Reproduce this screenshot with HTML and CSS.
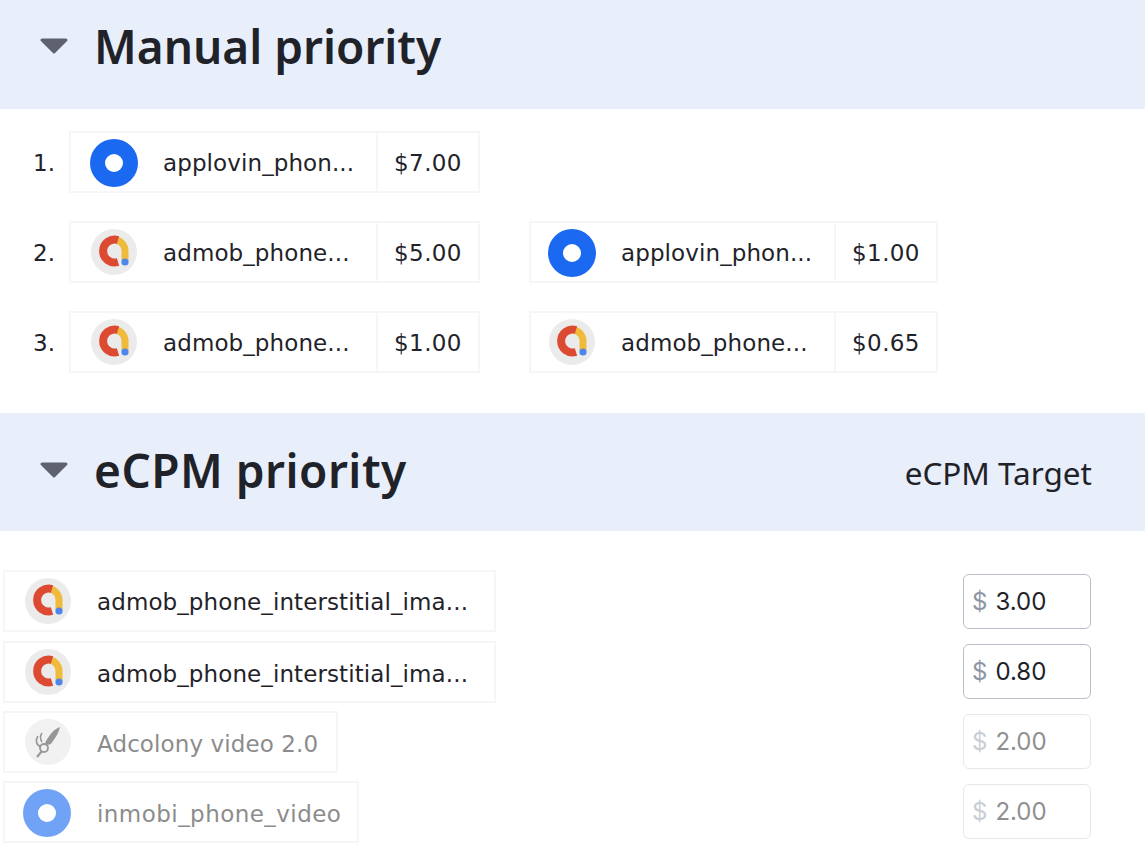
FILE: index.html
```html
<!DOCTYPE html>
<html lang="en">
<head>
  <meta charset="UTF-8">
  <title>Mediation priority</title>
  <link rel="stylesheet" href="styles.css">
</head>
<body>
  <svg class="defs" width="0" height="0">
    <symbol id="caret" viewBox="0 0 28 16">
      <path d="M2 2 H26 L14 14 Z" fill="#5e6270" stroke="#5e6270" stroke-width="3" stroke-linejoin="round"/>
    </symbol>
    <symbol id="admob" viewBox="0 0 46 46">
      <circle cx="23" cy="23" r="23" fill="#ebebeb"/>
      <path d="M25 11 A11 11 0 0 1 34 22 L34 32" fill="none" stroke="#f0bb3c" stroke-width="7"/>
      <path d="M27 11 A11.500 11.500 0 1 0 27 33" fill="none" stroke="#dc4a32" stroke-width="8"/>
      <circle cx="34" cy="33" r="3.600" fill="#4f86ec"/>
    </symbol>
    <symbol id="adcolony" viewBox="0 0 46 46">
      <circle cx="23" cy="23" r="23" fill="#f1f1f1"/>
      <path d="M35 8 C29 10 24 16 20 24 C23 27 26 26 28 22 C31 18 34 13 35 8 Z" fill="#979797"/>
      <path d="M13 17 C10 21 11 26 16 28 M17 14 C15 17 15 20 17 23" fill="none" stroke="#979797" stroke-width="1.600"/>
      <circle cx="19" cy="29" r="4" fill="none" stroke="#979797" stroke-width="1.800"/>
      <path d="M17 32 L12 38" stroke="#979797" stroke-width="2" fill="none"/>
    </symbol>
    <symbol id="ring" viewBox="0 0 48 48">
      <circle cx="24" cy="24" r="24" fill="currentColor"/>
      <circle cx="24" cy="24" r="9" fill="#fff"/>
    </symbol>
  </svg>

  <div class="section-head manual-head">
    <svg class="caret"><use href="#caret"/></svg>
    <h2>Manual priority</h2>
  </div>

  <div class="manual-list">
    <div class="manual-row">
      <span class="num">1.</span>
      <div class="chip chip-manual">
        <div class="chip-name"><svg class="logo logo-ring"><use href="#ring"/></svg><span>applovin_phon...</span></div>
        <div class="chip-price">$7.00</div>
      </div>
    </div>
    <div class="manual-row">
      <span class="num">2.</span>
      <div class="chip chip-manual">
        <div class="chip-name"><svg class="logo"><use href="#admob"/></svg><span>admob_phone...</span></div>
        <div class="chip-price">$5.00</div>
      </div>
      <div class="chip chip-manual">
        <div class="chip-name"><svg class="logo logo-ring"><use href="#ring"/></svg><span>applovin_phon...</span></div>
        <div class="chip-price">$1.00</div>
      </div>
    </div>
    <div class="manual-row">
      <span class="num">3.</span>
      <div class="chip chip-manual">
        <div class="chip-name"><svg class="logo"><use href="#admob"/></svg><span>admob_phone...</span></div>
        <div class="chip-price">$1.00</div>
      </div>
      <div class="chip chip-manual">
        <div class="chip-name"><svg class="logo"><use href="#admob"/></svg><span>admob_phone...</span></div>
        <div class="chip-price">$0.65</div>
      </div>
    </div>
  </div>

  <div class="section-head ecpm-head">
    <svg class="caret"><use href="#caret"/></svg>
    <h2>eCPM priority</h2>
    <span class="target-label">eCPM Target</span>
  </div>

  <div class="ecpm-list">
    <div class="ecpm-row">
      <div class="chip chip-wide">
        <div class="chip-name"><svg class="logo"><use href="#admob"/></svg><span>admob_phone_interstitial_ima...</span></div>
      </div>
      <div class="price-input"><span class="dollar">$</span><span>3.00</span></div>
    </div>
    <div class="ecpm-row">
      <div class="chip chip-wide">
        <div class="chip-name"><svg class="logo"><use href="#admob"/></svg><span>admob_phone_interstitial_ima...</span></div>
      </div>
      <div class="price-input"><span class="dollar">$</span><span>0.80</span></div>
    </div>
    <div class="ecpm-row off">
      <div class="chip chip-adcolony">
        <div class="chip-name"><svg class="logo"><use href="#adcolony"/></svg><span>Adcolony video 2.0</span></div>
      </div>
      <div class="price-input"><span class="dollar">$</span><span>2.00</span></div>
    </div>
    <div class="ecpm-row off">
      <div class="chip chip-inmobi">
        <div class="chip-name"><svg class="logo logo-ring"><use href="#ring"/></svg><span>inmobi_phone_video</span></div>
      </div>
      <div class="price-input"><span class="dollar">$</span><span>2.00</span></div>
    </div>
  </div>
</body>
</html>
```

FILE: styles.css
```css
/* Base */
body {
  margin: 0;
  background: #fff;
  color: #1f2329;
  font-family: 'Inter', sans-serif;
  overflow: hidden;
}

.defs {
  display: block;
  height: 0;
}

/* Section bars */
.section-head {
  display: flex;
  align-items: center;
  box-sizing: border-box;
  background: #e8eefa;
  padding-left: 40px;
  padding-right: 53px;
}

.manual-head {
  height: 109px;
  padding-bottom: 18px;
}

.ecpm-head {
  height: 118px;
  margin-top: 40px;
  padding-bottom: 5px;
}

.section-head h2 {
  margin: 0 0 0 26px;
  font-family: 'Noto Sans', sans-serif;
  font-size: 46px;
  font-weight: 600;
  line-height: 60px;
  color: #1f2329;
}

.ecpm-head h2 {
  letter-spacing: 0.5px;
}

.caret {
  width: 28px;
  height: 16px;
  flex: none;
}

.target-label {
  margin-left: auto;
  margin-top: 5px;
  font-family: 'Noto Sans', sans-serif;
  font-size: 31.500px;
  color: #1f2329;
}

/* Chips */
.chip {
  display: flex;
  height: 62px;
  box-sizing: border-box;
  border: 2px solid #f5f6f8;
  font-size: 23px;
  font-family: 'DejaVu Sans', sans-serif;
  letter-spacing: 0.1px;
}

.chip-name {
  display: flex;
  align-items: center;
  flex: 1;
  padding-left: 20px;
  white-space: nowrap;
}

.chip-name span {
  padding-top: 2px;
}

.logo {
  width: 46px;
  height: 46px;
  margin-right: 26px;
  flex: none;
}

.logo-ring {
  width: 48px;
  height: 48px;
  margin-top: 2px;
  margin-left: -1px;
  margin-right: 25px;
  color: #1a69f0;
}

.chip-price {
  display: flex;
  align-items: center;
  justify-content: center;
  box-sizing: border-box;
  width: 102px;
  padding-top: 2px;
  border-left: 2px solid #f5f6f8;
  letter-spacing: 0.4px;
}

/* Manual priority */
.manual-list {
  display: flex;
  flex-direction: column;
  gap: 28px;
  padding-top: 22px;
}

.manual-row {
  display: flex;
  align-items: center;
}

.num {
  width: 69px;
  padding-left: 33px;
  box-sizing: border-box;
  font-family: 'DejaVu Sans', sans-serif;
  font-size: 23px;
  margin-top: 2px;
}

.chip-manual {
  width: 411px;
  margin-right: 49px;
}

.chip-manual:last-child {
  margin-right: 0;
}

.chip-manual + .chip-manual {
  width: 409px;
}

.chip-manual + .chip-manual .chip-name {
  padding-left: 18px;
}

/* eCPM priority */
.ecpm-list {
  display: flex;
  flex-direction: column;
  gap: 8px;
  padding: 39px 54px 0 3px;
}

.ecpm-row {
  display: flex;
  align-items: center;
  justify-content: space-between;
}

.ecpm-row:first-child {
  margin-bottom: 1px;
}

.ecpm-row + .ecpm-row .chip-name span {
  padding-top: 4px;
}

.ecpm-row + .ecpm-row .price-input {
  margin-top: -2px;
}

.chip-wide {
  width: 493px;
}

.chip-adcolony {
  width: 335px;
}

.chip-inmobi {
  width: 356px;
  letter-spacing: 0.450px;
}

.ecpm-row .logo-ring {
  margin-left: -2px;
  margin-right: 26px;
}

.price-input {
  display: flex;
  align-items: center;
  gap: 8px;
  width: 128px;
  height: 55px;
  box-sizing: border-box;
  padding-left: 8px;
  border: 1.5px solid #b9bfc8;
  border-radius: 6px;
  font-family: 'Inter', sans-serif;
  font-size: 24px;
}

.dollar {
  color: #8d96a5;
}

.off .chip-name {
  color: #8c8c8c;
}

.off .logo-ring {
  color: #70a3f6;
}

.off .price-input {
  border-color: #e6e8eb;
  color: #909090;
}

.off .dollar {
  color: #c9ced6;
}
```
